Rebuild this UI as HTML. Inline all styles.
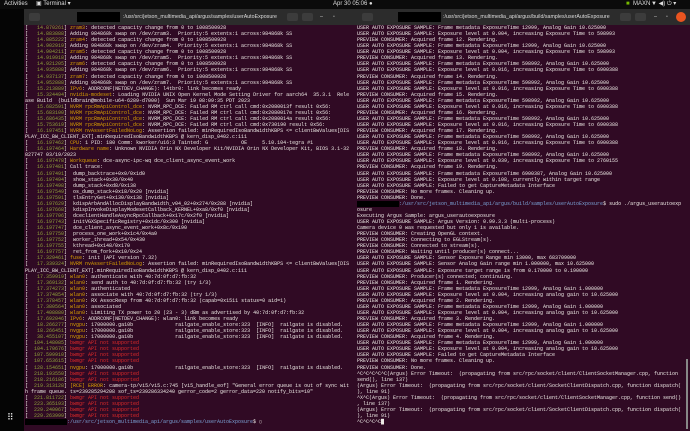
<!DOCTYPE html>
<html><head><meta charset="utf-8"><style>
*{margin:0;padding:0;box-sizing:border-box}
body{width:690px;height:431px;background:#000;overflow:hidden;position:relative;font-family:"Liberation Sans",sans-serif}
#top{position:absolute;left:0;top:0;width:690px;height:9px;background:#0b0b0b;color:#ddd;font-size:6px;line-height:9px}
#dock{position:absolute;left:0;top:9px;width:24px;height:422px;background:#050505}
.win{position:absolute;top:9px;height:422px;background:#300a24;overflow:hidden}
.tb{position:absolute;left:0;top:0;right:0;height:16px;background:#2c2c2c;color:#ddd;font-size:5.3px;line-height:16px}
pre{position:absolute;top:25px;font-family:"Liberation Mono",monospace;font-size:5px;line-height:6.07px;color:#ece8e4;white-space:pre}
t{color:#8ea03a}
y{color:#d9a000}
r{color:#e02a2a}
b{color:#7aa3d6;font-weight:normal}
k{background:#000;color:#000}
.ic{position:absolute;top:4px;width:11px;height:8px;border-radius:2px;background:#3c3c3c}
</style></head><body>
<div id="top">
<span style="position:absolute;left:4px">Activities</span>
<span style="position:absolute;left:36px">▣ Terminal ▾</span>
<span style="position:absolute;left:333px">Apr 30 05:06 ●</span>
<span style="position:absolute;left:626px;color:#76b900">■</span><span style="position:absolute;left:633px">MAXN</span>
<span style="position:absolute;left:651px">▼ ◀) ⏻ ▾</span>
</div>
<div id="dock"><div style="position:absolute;left:7px;top:404px;color:#eee;font-size:9px;line-height:9px">⠿</div></div>

<div class="win" style="left:24px;width:328px">
<div class="tb"><div class="ic" style="left:5px"></div><div style="position:absolute;left:53px;top:3px;width:43px;height:10px;background:#000"></div><span style="position:absolute;left:99px">:/usr/src/jetson_multimedia_api/argus/samples/userAutoExposure</span><div class="ic" style="left:263px"></div><div class="ic" style="left:278px"></div><span style="position:absolute;left:296px">–</span><span style="position:absolute;left:309px">▫</span></div>
</div>
<pre style="left:25px;width:326px;overflow:hidden">[<t>   14.870261</t>] <y>zram3</y>: detected capacity change from 0 to 1008500928
[<t>   14.883888</t>] Adding 984868k swap on /dev/zram3.  Priority:5 extents:1 across:984868k SS
[<t>   14.885222</t>] <y>zram4</y>: detected capacity change from 0 to 1008500928
[<t>   14.902919</t>] Adding 984868k swap on /dev/zram4.  Priority:5 extents:1 across:984868k SS
[<t>   14.904211</t>] <y>zram5</y>: detected capacity change from 0 to 1008500928
[<t>   14.919918</t>] Adding 984868k swap on /dev/zram5.  Priority:5 extents:1 across:984868k SS
[<t>   14.921205</t>] <y>zram6</y>: detected capacity change from 0 to 1008500928
[<t>   14.935888</t>] Adding 984868k swap on /dev/zram6.  Priority:5 extents:1 across:984868k SS
[<t>   14.937137</t>] <y>zram7</y>: detected capacity change from 0 to 1008500928
[<t>   14.952888</t>] Adding 984868k swap on /dev/zram7.  Priority:5 extents:1 across:984868k SS
[<t>   15.213889</t>] <y>IPv6</y>: ADDRCONF(NETDEV_CHANGE): l4tbr0: link becomes ready
[<t>   15.324494</t>] <y>nvidia-modeset</y>: Loading NVIDIA UNIX Open Kernel Mode Setting Driver for aarch64  35.3.1  Rele
ase Build  (buildbrain@mobile-u64-6289-d7000)  Sun Mar 19 08:09:35 PDT 2023
[<t>   15.682591</t>] <y>NVRM rpcRmApiControl_dce</y>: NVRM_RPC_DCE: Failed RM ctrl call cmd:0x2080013f result 0x56:
[<t>   15.683100</t>] <y>NVRM rpcRmApiControl_dce</y>: NVRM_RPC_DCE: Failed RM ctrl call cmd:0x2080017e result 0x56:
[<t>   15.686435</t>] <y>NVRM rpcRmApiControl_dce</y>: NVRM_RPC_DCE: Failed RM ctrl call cmd:0x2080014a result 0x56:
[<t>   15.753619</t>] <y>NVRM rpcRmApiControl_dce</y>: NVRM_RPC_DCE: Failed RM ctrl call cmd:0x730190 result 0x56:
[<t>   16.197451</t>] <y>NVRM nvAssertFailedNoLog</y>: Assertion failed: minRequiredIsoBandwidthKBPS &lt;= clientBwValues[DIS
PLAY_ICC_BW_CLIENT_EXT].minRequiredIsoBandwidthKBPS @ kern_disp_0402.c:111
[<t>   16.197462</t>] <y>CPU</y>: 1 PID: 180 Comm: kworker/u16:3 Tainted: G           OE     5.10.104-tegra #1
[<t>   16.197464</t>] <y>Hardware name</y>: Unknown NVIDIA Orin NX Developer Kit/NVIDIA Orin NX Developer Kit, BIOS 3.1-32
827747 03/19/2023
[<t>   16.197478</t>] <y>Workqueue</y>: dce-async-ipc-wq dce_client_async_event_work
[<t>   16.197481</t>] Call trace:
[<t>   16.197491</t>]  dump_backtrace+0x0/0x1d0
[<t>   16.197494</t>]  show_stack+0x30/0x40
[<t>   16.197498</t>]  dump_stack+0xd8/0x138
[<t>   16.197549</t>]  os_dump_stack+0x18/0x20 [nvidia]
[<t>   16.197591</t>]  tlsEntryGet+0x130/0x138 [nvidia]
[<t>   16.197629</t>]  kdispArbAndAllocDisplayBandwidth_v04_02+0x274/0x288 [nvidia]
[<t>   16.197668</t>]  kdispInvokeDisplayModesetCallback_KERNEL+0xa8/0xf0 [nvidia]
[<t>   16.197706</t>]  dceclientHandleAsyncRpcCallback+0x17c/0x2f0 [nvidia]
[<t>   16.197743</t>]  initVGXSpecificRegistry+0x1dc/0x300 [nvidia]
[<t>   16.197747</t>]  dce_client_async_event_work+0x8c/0x190
[<t>   16.197750</t>]  process_one_work+0x1c4/0x4a0
[<t>   16.197752</t>]  worker_thread+0x54/0x430
[<t>   16.197755</t>]  kthread+0x148/0x170
[<t>   16.197757</t>]  ret_from_fork+0x10/0x24
[<t>   17.329461</t>] <y>fuse</y>: init (API version 7.32)
[<t>   17.339324</t>] <y>NVRM nvAssertFailedNoLog</y>: Assertion failed: minRequiredIsoBandwidthKBPS &lt;= clientBwValues[DIS
PLAY_ICC_BW_CLIENT_EXT].minRequiredIsoBandwidthKBPS @ kern_disp_0402.c:111
[<t>   17.359919</t>] <y>wlan0</y>: authenticate with 40:7d:0f:d7:fb:32
[<t>   17.369132</t>] <y>wlan0</y>: send auth to 40:7d:0f:d7:fb:32 (try 1/3)
[<t>   17.374273</t>] <y>wlan0</y>: authenticated
[<t>   17.374854</t>] <y>wlan0</y>: associate with 40:7d:0f:d7:fb:32 (try 1/3)
[<t>   17.378457</t>] <y>wlan0</y>: RX AssocResp from 40:7d:0f:d7:fb:32 (capab=0x1511 status=0 aid=1)
[<t>   17.380564</t>] <y>wlan0</y>: associated
[<t>   17.408880</t>] <y>wlan0</y>: Limiting TX power to 20 (23 - 3) dBm as advertised by 40:7d:0f:d7:fb:32
[<t>   17.692046</t>] <y>IPv6</y>: ADDRCONF(NETDEV_CHANGE): wlan0: link becomes ready
[<t>   18.266277</t>] <y>nvgpu</y>: 17000000.ga10b              railgate_enable_store:323  [INFO]  railgate is disabled.
[<t>   18.266451</t>] <y>nvgpu</y>: 17000000.ga10b              railgate_enable_store:323  [INFO]  railgate is disabled.
[<t>   38.455107</t>] <y>nvgpu</y>: 17000000.ga10b              railgate_enable_store:323  [INFO]  railgate is disabled.
[<t>  104.148085</t>] <r>bwmgr API not supported</r>
[<t>  104.170676</t>] <r>bwmgr API not supported</r>
[<t>  107.599910</t>] <r>bwmgr API not supported</r>
[<t>  107.653615</t>] <r>bwmgr API not supported</r>
[<t>  128.154651</t>] <y>nvgpu</y>: 17000000.ga10b              railgate_enable_store:323  [INFO]  railgate is disabled.
[<t>  218.193550</t>] <r>bwmgr API not supported</r>
[<t>  218.216186</t>] <r>bwmgr API not supported</r>
[<t>  219.313128</t>] <y>[RCE] ERROR</y>: camera-tp/vi5/vi5.c:745 [vi5_handle_eof] "General error queue is out of sync wit
h frame queue. ts=239285294208 sof_ts=239286334240 gerror_code=2 gerror_data=220 notify_bits=10"
[<t>  221.811722</t>] <r>bwmgr API not supported</r>
[<t>  223.365193</t>] <r>bwmgr API not supported</r>
[<t>  229.240067</t>] <r>bwmgr API not supported</r>
[<t>  229.263999</t>] <r>bwmgr API not supported</r>
<k>xxxxxxxxxxxxxx</k><b>:/usr/src/jetson_multimedia_api/argus/samples/userAutoExposure</b>$ ▯</pre>

<div class="win" style="left:350px;width:340px">
<div class="tb"><div class="ic" style="left:12px"></div><div style="position:absolute;left:48px;top:3px;width:43px;height:10px;background:#000"></div><span style="position:absolute;left:93px">:/usr/src/jetson_multimedia_api/argus/build/samples/userAutoExposure</span><div class="ic" style="left:270px"></div><div class="ic" style="left:285px"></div><span style="position:absolute;left:304px">–</span><span style="position:absolute;left:316px">▫</span><div style="position:absolute;left:326px;top:3px;width:10px;height:10px;border-radius:50%;background:#e95420"></div></div>
<div style="position:absolute;left:336px;top:350px;width:2px;height:70px;background:#888"></div>
</div>
<pre style="left:357px;width:332px;overflow:hidden">USER AUTO EXPOSURE SAMPLE: Frame metadata ExposureTime 12999, Analog Gain 10.625000
USER AUTO EXPOSURE SAMPLE: Exposure level at 0.004, increasing Exposure Time to 598993
PREVIEW CONSUMER: Acquired frame 12. Rendering.
USER AUTO EXPOSURE SAMPLE: Frame metadata ExposureTime 12999, Analog Gain 10.625000
USER AUTO EXPOSURE SAMPLE: Exposure level at 0.004, increasing Exposure Time to 598993
PREVIEW CONSUMER: Acquired frame 13. Rendering.
USER AUTO EXPOSURE SAMPLE: Frame metadata ExposureTime 598992, Analog Gain 10.625000
USER AUTO EXPOSURE SAMPLE: Exposure level at 0.016, increasing Exposure Time to 6900388
PREVIEW CONSUMER: Acquired frame 14. Rendering.
USER AUTO EXPOSURE SAMPLE: Frame metadata ExposureTime 598992, Analog Gain 10.625000
USER AUTO EXPOSURE SAMPLE: Exposure level at 0.016, increasing Exposure Time to 6900388
PREVIEW CONSUMER: Acquired frame 15. Rendering.
USER AUTO EXPOSURE SAMPLE: Frame metadata ExposureTime 598992, Analog Gain 10.625000
USER AUTO EXPOSURE SAMPLE: Exposure level at 0.016, increasing Exposure Time to 6900388
PREVIEW CONSUMER: Acquired frame 16. Rendering.
USER AUTO EXPOSURE SAMPLE: Frame metadata ExposureTime 598992, Analog Gain 10.625000
USER AUTO EXPOSURE SAMPLE: Exposure level at 0.016, increasing Exposure Time to 6900388
PREVIEW CONSUMER: Acquired frame 17. Rendering.
USER AUTO EXPOSURE SAMPLE: Frame metadata ExposureTime 598992, Analog Gain 10.625000
USER AUTO EXPOSURE SAMPLE: Exposure level at 0.016, increasing Exposure Time to 6900388
PREVIEW CONSUMER: Acquired frame 18. Rendering.
USER AUTO EXPOSURE SAMPLE: Frame metadata ExposureTime 598992, Analog Gain 10.625000
USER AUTO EXPOSURE SAMPLE: Exposure level at 0.039, increasing Exposure Time to 2760155
PREVIEW CONSUMER: Acquired frame 19. Rendering.
USER AUTO EXPOSURE SAMPLE: Frame metadata ExposureTime 6900387, Analog Gain 10.625000
USER AUTO EXPOSURE SAMPLE: Exposure level at 0.108, currently within target range
USER AUTO EXPOSURE SAMPLE: Failed to get CaptureMetadata Interface
PREVIEW CONSUMER: No more frames. Cleaning up.
PREVIEW CONSUMER: Done.
<k>xxxxxxxxxxxxxx</k><b>:/usr/src/jetson_multimedia_api/argus/build/samples/userAutoExposure</b>$ sudo ./argus_userautoexp
osure
Executing Argus Sample: argus_userautoexposure
USER AUTO EXPOSURE SAMPLE: Argus Version: 0.99.3.3 (multi-process)
Camera device 0 was requested but only 1 is available.
PREVIEW CONSUMER: Creating OpenGL context.
PREVIEW CONSUMER: Connecting to EGLStream(s).
PREVIEW CONSUMER: Connected to stream(s).
PREVIEW CONSUMER: Waiting until producer(s) connect...
USER AUTO EXPOSURE SAMPLE: Sensor Exposure Range min 13000, max 683709000
USER AUTO EXPOSURE SAMPLE: Sensor Analog Gain range min 1.000000, max 10.625000
USER AUTO EXPOSURE SAMPLE: Exposure target range is from 0.170000 to 0.190000
PREVIEW CONSUMER: Producer(s) connected; continuing.
PREVIEW CONSUMER: Acquired frame 1. Rendering.
USER AUTO EXPOSURE SAMPLE: Frame metadata ExposureTime 12999, Analog Gain 1.000000
USER AUTO EXPOSURE SAMPLE: Exposure level at 0.004, increasing analog gain to 10.625000
PREVIEW CONSUMER: Acquired frame 2. Rendering.
USER AUTO EXPOSURE SAMPLE: Frame metadata ExposureTime 12999, Analog Gain 1.000000
USER AUTO EXPOSURE SAMPLE: Exposure level at 0.004, increasing analog gain to 10.625000
PREVIEW CONSUMER: Acquired frame 3. Rendering.
USER AUTO EXPOSURE SAMPLE: Frame metadata ExposureTime 12999, Analog Gain 1.000000
USER AUTO EXPOSURE SAMPLE: Exposure level at 0.004, increasing analog gain to 10.625000
PREVIEW CONSUMER: Acquired frame 4. Rendering.
USER AUTO EXPOSURE SAMPLE: Frame metadata ExposureTime 12999, Analog Gain 1.000000
USER AUTO EXPOSURE SAMPLE: Exposure level at 0.004, increasing analog gain to 10.625000
USER AUTO EXPOSURE SAMPLE: Failed to get CaptureMetadata Interface
PREVIEW CONSUMER: No more frames. Cleaning up.
PREVIEW CONSUMER: Done.
^C^C^C^C^C(Argus) Error Timeout:  (propagating from src/rpc/socket/client/ClientSocketManager.cpp, function
send(), line 137)
(Argus) Error Timeout:  (propagating from src/rpc/socket/client/SocketClientDispatch.cpp, function dispatch(
), line 91)
^X^C(Argus) Error Timeout:  (propagating from src/rpc/socket/client/ClientSocketManager.cpp, function send()
, line 137)
(Argus) Error Timeout:  (propagating from src/rpc/socket/client/SocketClientDispatch.cpp, function dispatch(
), line 91)
^C^C^C^C█</pre>
</body></html>
